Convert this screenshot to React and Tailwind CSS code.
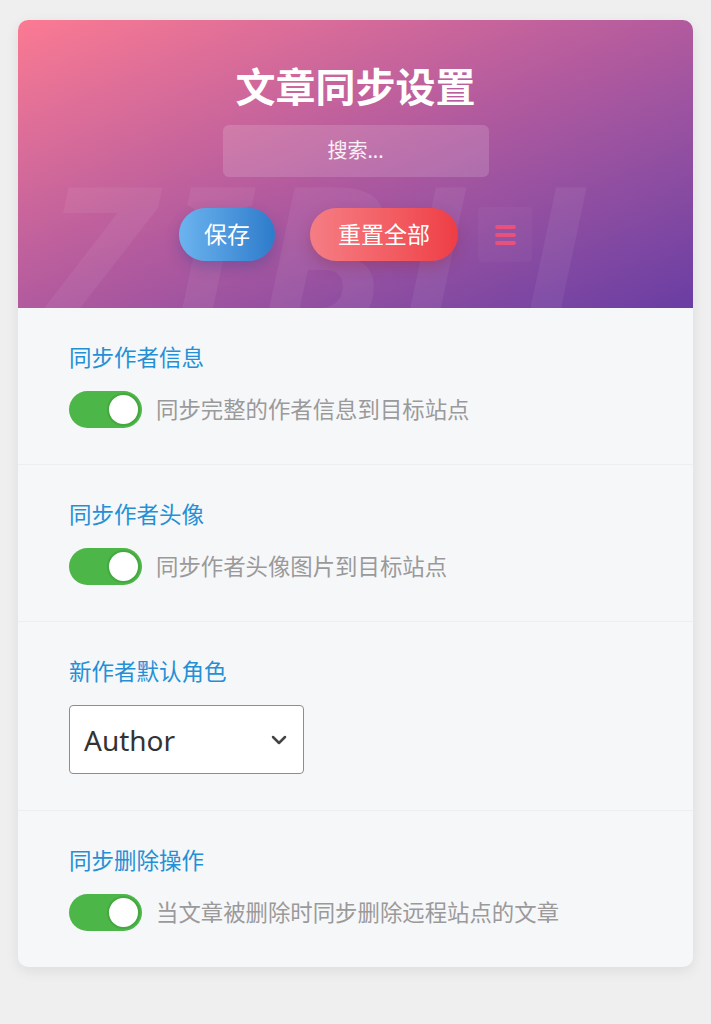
import { ChevronDown } from "lucide-react";

const font = { fontFamily: '"Noto Sans", "Noto Sans CJK SC", sans-serif' };

function Toggle() {
  return (
    <span className="flex h-[37px] w-[73px] shrink-0 items-center justify-end rounded-full bg-[#4cb648] pr-[2px]">
      <span className="h-[33px] w-[33px] rounded-full border-2 border-[#45a841] bg-white" />
    </span>
  );
}

function ToggleSection({ label, desc, last }) {
  return (
    <section className={`px-[51px] py-9 ${last ? "" : "border-b border-[#eceef1]"}`}>
      <h3 className="mb-[19px] text-[22.5px] leading-7 text-[#2390d6]">{label}</h3>
      <div className="flex items-center gap-[14px]">
        <Toggle />
        <span className="text-[22.4px] leading-7 text-[#9a9a9a]">{desc}</span>
      </div>
    </section>
  );
}

export default function App() {
  return (
    <div className="min-h-screen bg-[#efefef] px-[18px] pt-5 pb-14" style={font}>
      <div className="overflow-hidden rounded-[10px] bg-[#f6f7f9] shadow-[0_4px_14px_rgba(0,0,0,0.08)]">
        <header className="relative overflow-hidden bg-gradient-to-br from-[#fb7a92] via-[#b25a9e] to-[#6a3da3] pt-[43px] pb-[46px]">
          <div className="pointer-events-none absolute left-[24px] top-[132px] select-none text-[205px] font-bold italic leading-none tracking-[14px] text-white/[0.06]">
            ZIBLL
          </div>
          <div className="relative flex flex-col items-center">
            <h1 className="text-[40px] font-bold leading-[48px] text-white">文章同步设置</h1>
            <div className="mt-[14px] flex h-[52px] w-[266px] items-center justify-center rounded-md bg-white/15 text-[20px] text-white/90">
              搜索...
            </div>
            <div className="mt-[30px] flex items-center">
              <button className="h-[53px] w-[96px] rounded-full bg-gradient-to-r from-[#6cb4ef] to-[#2d7bcb] text-[23px] text-white shadow-[0_6px_14px_rgba(40,60,140,0.3)]">
                保存
              </button>
              <button className="ml-[35px] h-[53px] w-[148px] rounded-full bg-gradient-to-r from-[#f57d84] to-[#ee3c45] text-[23px] text-white shadow-[0_6px_14px_rgba(140,40,60,0.3)]">
                重置全部
              </button>
              <div className="ml-[20px] flex h-[55px] w-[54px] flex-col items-center justify-center gap-[4px] rounded bg-white/[0.03]">
                <span className="h-[4px] w-[21px] rounded-sm bg-[#e9507a]" />
                <span className="h-[4px] w-[21px] rounded-sm bg-[#e9507a]" />
                <span className="h-[4px] w-[21px] rounded-sm bg-[#e9507a]" />
              </div>
            </div>
          </div>
        </header>

        <ToggleSection label="同步作者信息" desc="同步完整的作者信息到目标站点" />
        <ToggleSection label="同步作者头像" desc="同步作者头像图片到目标站点" />

        <section className="border-b border-[#eceef1] px-[51px] py-9">
          <h3 className="mb-[19px] text-[22.5px] leading-7 text-[#2390d6]">新作者默认角色</h3>
          <div className="flex h-[69px] w-[235px] items-center justify-between rounded border border-[#8d8d8d] bg-white pl-[14px] pr-[12px]">
            <span className="text-[28px] text-[#333]">Author</span>
            <ChevronDown size={24} strokeWidth={2.5} className="text-[#444]" />
          </div>
        </section>

        <ToggleSection label="同步删除操作" desc="当文章被删除时同步删除远程站点的文章" last />
      </div>
    </div>
  );
}
